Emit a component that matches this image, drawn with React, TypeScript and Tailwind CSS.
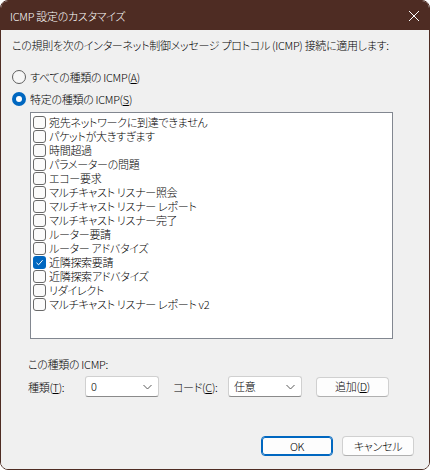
import React from "react";

const FONT = "font-['Noto_Sans_CJK_JP',sans-serif] [font-feature-settings:'palt']";

const ITEMS: { label: string; checked?: boolean }[] = [
  { label: "宛先ネットワークに到達できません" },
  { label: "パケットが大きすぎます" },
  { label: "時間超過" },
  { label: "パラメーターの問題" },
  { label: "エコー要求" },
  { label: "マルチキャスト リスナー照会" },
  { label: "マルチキャスト リスナー レポート" },
  { label: "マルチキャスト リスナー完了" },
  { label: "ルーター要請" },
  { label: "ルーター アドバタイズ" },
  { label: "近隣探索要請", checked: true },
  { label: "近隣探索アドバタイズ" },
  { label: "リダイレクト" },
  { label: "マルチキャスト リスナー レポート v2" },
];

function Radio({ selected }: { selected?: boolean }) {
  if (selected) {
    return (
      <span className="w-[14px] h-[14px] rounded-full bg-[#0067c0] flex items-center justify-center shrink-0">
        <span className="w-[6px] h-[6px] rounded-full bg-white" />
      </span>
    );
  }
  return <span className="w-[14px] h-[14px] rounded-full border border-[#5f5f5f] bg-[#f6f6f6] shrink-0" />;
}

function Check({ checked }: { checked?: boolean }) {
  if (checked) {
    return (
      <span className="w-[13px] h-[13px] rounded-[3px] bg-[#0067c0] flex items-center justify-center shrink-0">
        <svg width="9" height="9" viewBox="0 0 9 9">
          <path d="M1.5 4.8 L3.6 6.8 L7.6 2.2" fill="none" stroke="white" strokeWidth="1" />
        </svg>
      </span>
    );
  }
  return <span className="w-[13px] h-[13px] rounded-[3px] border border-[#6a6a6a] bg-[#fbfbfb] shrink-0" />;
}

function Select({ value, width }: { value: string; width: string }) {
  return (
    <div
      className={`${width} h-[21px] bg-white border border-[#d0d0d0] border-b-[#8a8a8a] rounded-[3px] flex items-center justify-between pl-[5px] pr-[6px]`}
    >
      <span className="block leading-[13px]">{value}</span>
      <svg width="9" height="6" viewBox="0 0 9 6">
        <path d="M0.5 1 L4.5 5 L8.5 1" fill="none" stroke="#5a5a5a" strokeWidth="1" />
      </svg>
    </div>
  );
}

function Button({ children, primary, width }: { children: React.ReactNode; primary?: boolean; width: string }) {
  return (
    <div
      className={`${width} h-[20px] rounded-[4px] bg-[#fdfdfd] flex items-center justify-center ${
        primary ? "border border-[#0067c0] outline outline-1 outline-[#0067c0] -outline-offset-2" : "border border-[#d0d0d0] border-b-[#b0b0b0]"
      }`}
    >
      <span className="block leading-[13px]">{children}</span>
    </div>
  );
}

export default function App() {
  return (
    <div className={`w-[430px] h-[470px] bg-white ${FONT} font-light text-[11px] tracking-[-0.3px]`}>
      <div className="w-full h-full rounded-[8px] overflow-hidden border border-[#4e2c23] flex flex-col">
        <div className="h-[29px] bg-[#4e2c23] flex items-center justify-between pl-[9px] pr-[9px] shrink-0">
          <span className="block text-white leading-[14px]">ICMP 設定のカスタマイズ</span>
          <svg width="12" height="12" viewBox="0 0 12 12">
            <path d="M1 1 L11 11 M11 1 L1 11" stroke="white" strokeWidth="1" />
          </svg>
        </div>
        <div className="flex-1 bg-[#f0f0f0] flex flex-col text-black leading-[14px]">
          <div className="pt-[8px] pl-[11px] whitespace-nowrap">
            この規則を次のインターネット制御メッセージ プロトコル (ICMP) 接続に適用します:
          </div>
          <div className="pl-[11px] mt-[18px] flex items-center gap-[4px] h-[14px]">
            <Radio />
            <span className="block">
              すべての種類の ICMP(<span className="underline">A</span>)
            </span>
          </div>
          <div className="pl-[11px] mt-[8px] flex items-center gap-[4px] h-[14px]">
            <Radio selected />
            <span className="block">
              特定の種類の ICMP(<span className="underline">S</span>)
            </span>
          </div>
          <div className="ml-[29px] mt-[6px] w-[363px] h-[227px] bg-white border border-[#828790] pt-[2px] pl-[2px]">
            {ITEMS.map((it) => (
              <div key={it.label} className="h-[14px] flex items-center gap-[3px]">
                <Check checked={it.checked} />
                <span className="block whitespace-nowrap leading-[13px]">{it.label}</span>
              </div>
            ))}
          </div>
          <div className="pl-[27px] mt-[18px]">この種類の ICMP:</div>
          <div className="pl-[27px] mt-[5px] flex items-center h-[21px]">
            <span className="block w-[57px]">
              種類(<span className="underline">T</span>):
            </span>
            <Select value="0" width="w-[74px]" />
            <span className="block ml-[14px] w-[55px]">
              コード(<span className="underline">C</span>):
            </span>
            <Select value="任意" width="w-[74px]" />
            <div className="ml-[14px]">
              <Button width="w-[73px]">
                追加(<span className="underline">D</span>)
              </Button>
            </div>
          </div>
          <div className="mt-auto mb-[13px] flex justify-end gap-[9px] pr-[15px]">
            <Button primary width="w-[72px]">
              OK
            </Button>
            <Button width="w-[72px]">キャンセル</Button>
          </div>
        </div>
      </div>
    </div>
  );
}
